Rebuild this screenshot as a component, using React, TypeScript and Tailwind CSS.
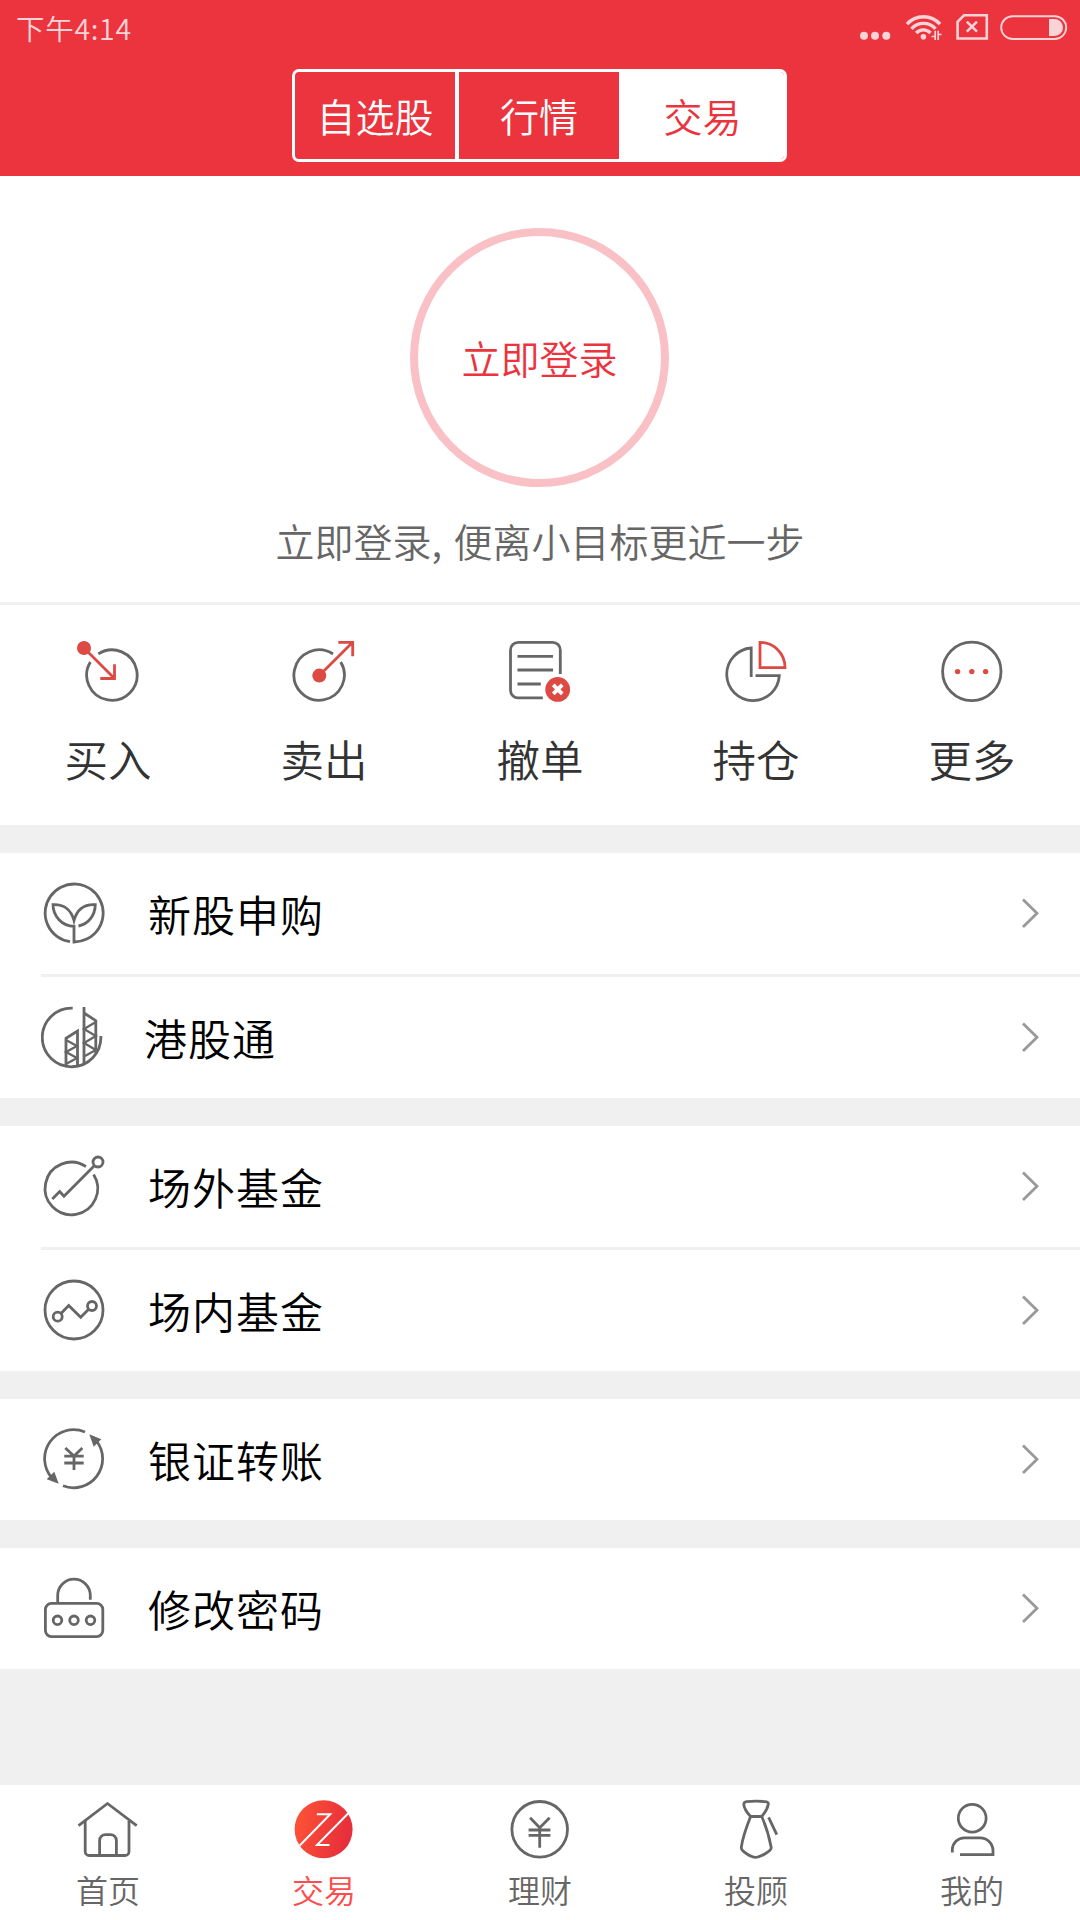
import clsx from "clsx";
import { FC, ReactNode } from "react";

type IconProps = { children: ReactNode; size?: number };

const Icon: FC<IconProps> = ({ children, size = 64 }) => (
  <svg
    width={size}
    height={size}
    viewBox={`0 0 ${size} ${size}`}
    fill="none"
    stroke="#666"
    strokeWidth="2.8"
    className="shrink-0"
  >
    {children}
  </svg>
);

const RED = "#dc4a43";

const actions = [
  {
    name: "买入",
    icon: (
      <>
        <path d="M22.3 13.9A25.2 25.2 0 1 1 14.4 22" />
        <circle cx="8" cy="8" r="7" fill={RED} stroke="none" />
        <path d="M8 8L38.5 38.5M38.5 24.3V38.5H24.3" stroke={RED} />
      </>
    ),
  },
  {
    name: "卖出",
    icon: (
      <>
        <path d="M48.7 22A25.2 25.2 0 1 1 41 14" />
        <circle cx="27.3" cy="35.6" r="7" fill={RED} stroke="none" />
        <path d="M27.3 35.6L60.7 2.3M46.3 2.3H60.7V16.3" stroke={RED} />
      </>
    ),
  },
  {
    name: "撤单",
    icon: (
      <>
        <path d="M52.3 34V10a7.7 7.7 0 0 0-7.7-7.7H10.3A7.7 7.7 0 0 0 2.5 10V50.2a7.7 7.7 0 0 0 7.7 7.7H34.8" />
        <path d="M9.5 16.3H45M9.5 30H45M9.5 44H32.8" />
        <circle cx="49.7" cy="49.4" r="12.4" fill={RED} stroke="none" />
        <path d="M45.2 44.9l9 9m0-9l-9 9" stroke="#fff" strokeWidth="3.8" />
      </>
    ),
  },
  {
    name: "持仓",
    icon: (
      <>
        <path d="M27.2 37V8A26.3 26.3 0 1 0 55.3 35.7H31.5" />
        <path d="M36 2.4A25 25 0 0 1 61 27.6H36Z" stroke={RED} />
      </>
    ),
  },
  {
    name: "更多",
    icon: (
      <>
        <circle cx="31.8" cy="31.4" r="29.2" />
        <g fill={RED} stroke="none">
          <circle cx="17.6" cy="31.6" r="2.7" />
          <circle cx="31.8" cy="31.6" r="2.7" />
          <circle cx="45.6" cy="31.6" r="2.7" />
        </g>
      </>
    ),
  },
];

type Row = { name: string; icon: ReactNode; tight?: boolean };

const groups: Row[][] = [
  [
    {
      name: "新股申购",
      icon: (
        <>
          <path d="M29 60.7A29 29 0 1 1 33 61V45.3C21 45.3 12 35 12 23.6C22 23 30 28 33 39.5C36 28 44 23 54.3 23.6C54 34 48 43 37.5 45" />
        </>
      ),
    },
    {
      name: "港股通",
      tight: true,
      icon: (
        <>
          <path d="M31.7 3.2A29.3 29.3 0 1 0 59.8 31" />
          <path d="M25 60.5V33.3L36.5 26V60.5" />
          <path d="M43 2V59M43 8L54.8 15.7V48" />
          <path
            d="M25 35L36 41L25 47L36 53L25 59M54.8 17L43 24L54.8 31L43 38L54.8 45L44 51"
            strokeWidth="2.3"
          />
        </>
      ),
    },
  ],
  [
    {
      name: "场外基金",
      icon: (
        <>
          <path d="M52.6 20.4A26.3 26.3 0 1 1 45 12.6" />
          <circle cx="57" cy="8" r="5" />
          <path d="M11.3 45L18.7 37.5L23 42.3L53.3 11.7" />
        </>
      ),
    },
    {
      name: "场内基金",
      icon: (
        <>
          <circle cx="33" cy="32" r="29" />
          <circle cx="16.7" cy="38.7" r="4.5" />
          <circle cx="51" cy="28" r="4.5" />
          <path d="M20 35.5L27.7 27.5L39.7 39.2L47.7 31.3" />
        </>
      ),
    },
  ],
  [
    {
      name: "银证转账",
      icon: (
        <>
          <path d="M44 5A29 29 0 0 0 11 51M22 58.8A29 29 0 0 0 55.5 14" />
          <path
            d="M17.7 56.7L5.7 52.3L13.3 44.7ZM48.3 7.3L60.3 12.3L52.7 19.7Z"
            fill="#666"
            stroke="none"
          />
          <path d="M24.3 21L33 29L41.3 21M33 29V43M23.3 29.2H42.7M23.3 36H42.7" />
        </>
      ),
    },
  ],
  [
    {
      name: "修改密码",
      icon: (
        <>
          <rect x="4.4" y="27.4" width="57.4" height="33.2" rx="6" />
          <path d="M16.7 27V19.5A16.3 16.3 0 0 1 49.3 19.5V23.7" />
          <circle cx="16.5" cy="44.3" r="4.3" />
          <circle cx="33" cy="44.3" r="4.3" />
          <circle cx="49.5" cy="44.3" r="4.3" />
        </>
      ),
    },
  ],
];

const tabs = [
  {
    name: "首页",
    icon: (
      <>
        <path d="M2.5 28.7L31.5 6.5L60.7 28.7" strokeLinejoin="round" />
        <path d="M9.2 24V54.5a4 4 0 0 0 4 4H49a4 4 0 0 0 4-4V24" />
        <path d="M23.6 58.5V43.6a6 6 0 0 1 6-6H34.4a6 6 0 0 1 6 6V58.5" />
      </>
    ),
  },
  {
    name: "交易",
    active: true,
    icon: (
      <>
        <defs>
          <linearGradient id="trade" x1="0" y1="0" x2="1" y2="0.2">
            <stop offset="0" stopColor="#ff5535" />
            <stop offset="1" stopColor="#e72e3c" />
          </linearGradient>
        </defs>
        <circle cx="31.6" cy="32.3" r="29" fill="url(#trade)" stroke="none" />
        <path
          d="M24.8 17.3H38.2L7.5 48.8M56.3 16.2L25 48H37.5"
          stroke="#fff"
          strokeWidth="2"
        />
      </>
    ),
  },
  {
    name: "理财",
    icon: (
      <>
        <circle cx="31.7" cy="32.3" r="27.8" />
        <path d="M22.1 20.7L31.7 30.8L41.6 20.7M31.7 30.3V50.7M20.6 33H42.4M20.6 38.4H42.4" />
      </>
    ),
  },
  {
    name: "投顾",
    icon: (
      <>
        <path d="M26.6 19.5C22 14.5 20 11 19.8 7.3C19.8 5.5 20.5 5 22.5 4.7Q32 3.5 41.5 4.7C43.5 5 44.5 5.8 44.3 7.3C43.5 12 42 14.5 37.7 19.5Z" />
        <path d="M26.6 19.5C22 31 18.5 41 17.3 50.5C17 54 27 60.3 31.6 60.3C36 60.3 47.5 54 47.2 50.5C45 38 41.5 28 37.7 19.5M44.6 20.3L52.8 37.7" />
      </>
    ),
  },
  {
    name: "我的",
    icon: (
      <>
        <circle cx="32.2" cy="21.2" r="13.9" />
        <path d="M12.3 55.5V52.5A12 12 0 0 1 24.3 40.8H40A13 13 0 0 1 53 53.5V57.6H20" />
      </>
    ),
  },
];

const StatusBar: FC = () => (
  <div className="flex h-[54px] items-center pr-3 pl-4 text-[#fad3d6]">
    <span className="mt-0.5 mr-auto text-[28.5px] leading-none tracking-[0.7px]">
      下午4:14
    </span>
    <svg width="32" height="30" viewBox="0 0 32 30" fill="currentColor">
      <circle cx="5" cy="23.7" r="4" />
      <circle cx="16" cy="23.7" r="4" />
      <circle cx="27.3" cy="23.7" r="4" />
    </svg>
    <svg
      width="38"
      height="30"
      viewBox="0 0 38 30"
      fill="none"
      stroke="currentColor"
      strokeWidth="3.4"
      className="ml-3.5"
    >
      <path d="M2 12.2A22 22 0 0 1 35 12.2M6.5 16.8A16 16 0 0 1 30.5 16.8M11.2 21A9.8 9.8 0 0 1 25.5 21" />
      <circle cx="18.4" cy="24.8" r="2.8" fill="currentColor" stroke="none" />
      <path
        d="M30.2 28V18.8M29.5 24.5L26.5 24.5M33.2 28V18.8M33.8 22.5H36.5"
        strokeWidth="1.7"
      />
    </svg>
    <svg
      width="34"
      height="30"
      viewBox="0 0 34 30"
      fill="none"
      stroke="currentColor"
      strokeWidth="2.6"
      className="ml-3"
    >
      <path d="M9 3.3H31.8V26.5H2.6V9.8Z" />
      <path d="M11.8 9.6L22 19.6M22 9.6L11.8 19.6" />
    </svg>
    <svg width="69" height="30" viewBox="0 0 69 30" className="ml-2.5">
      <rect
        x="2.2"
        y="4.2"
        width="65"
        height="22.8"
        rx="11.4"
        fill="none"
        stroke="currentColor"
        strokeWidth="1.9"
      />
      <path d="M50 7H55.5a8.5 8.5 0 0 1 0 17H50Z" fill="currentColor" />
    </svg>
  </div>
);

export default function App() {
  return (
    <div className="flex h-[1920px] w-[1080px] flex-col bg-[#f0f0f0] font-['Noto_Sans_CJK_SC',sans-serif] font-[350] whitespace-nowrap">
      <header className="h-[176px] bg-[#eb343e]">
        <StatusBar />
        <div className="mt-[15px] ml-[292px] flex h-[93px] w-[495px] overflow-hidden rounded-[7px] border-[3px] border-white text-[39px] leading-none text-white">
          <div className="flex w-[164px] items-center justify-center border-r-[4px] pb-px">
            自选股
          </div>
          <div className="flex w-[160px] items-center justify-center pb-px">
            行情
          </div>
          <div className="flex grow items-center justify-center bg-white pb-px pl-0.5 text-[#eb343e]">
            交易
          </div>
        </div>
      </header>

      <section className="flex h-[429px] flex-col items-center border-b-[3px] border-[#f0f0f0] bg-white pt-[52px]">
        <button className="mr-px flex size-[259px] items-center justify-center rounded-full border-8 border-[#f9c1c5] pb-px text-[39px] leading-none text-[#eb343e]">
          立即登录
        </button>
        <p className="mt-[33px] text-[39px] leading-10 [word-spacing:3px] text-[#666]">
          立即登录, 便离小目标更近一步
        </p>
      </section>

      <section className="grid h-[220px] grid-cols-5 bg-white pt-[35px]">
        {actions.map(({ name, icon }) => (
          <div key={name} className="flex flex-col items-center">
            <Icon>{icon}</Icon>
            <span className="mt-[33px] text-[43.5px] leading-11 text-[#333]">
              {name}
            </span>
          </div>
        ))}
      </section>

      {groups.map((rows) => (
        <section key={rows[0].name} className="mt-7 bg-white pl-[41px]">
          {rows.map(({ name, icon, tight }, i) => (
            <div
              key={name}
              className={clsx(
                "flex items-center pr-10",
                i > 0 ? "h-[124px] border-t-[3px] border-[#f0f0f0]" : "h-[121px]",
              )}
            >
              <Icon size={65}>{icon}</Icon>
              <span
                className={clsx(
                  "text-[43px] leading-none tracking-[1px] text-black",
                  tight ? "ml-[38px]" : "ml-[42px]",
                )}
              >
                {name}
              </span>
              <svg
                width="19"
                height="31"
                viewBox="0 0 19 31"
                fill="none"
                stroke="#999"
                strokeWidth="2.8"
                className="ml-auto"
              >
                <path d="M2 1.5L16 15.2L2 29" />
              </svg>
            </div>
          ))}
        </section>
      ))}

      <nav className="mt-auto grid h-[135px] grid-cols-5 bg-white pt-3">
        {tabs.map(({ name, icon, active }) => (
          <div key={name} className="flex flex-col items-center">
            <Icon>{icon}</Icon>
            <span
              className={clsx(
                "mt-2.5 text-[32px] leading-9",
                active ? "text-[#ff4c4c]" : "text-[#666]",
              )}
            >
              {name}
            </span>
          </div>
        ))}
      </nav>
    </div>
  );
}
